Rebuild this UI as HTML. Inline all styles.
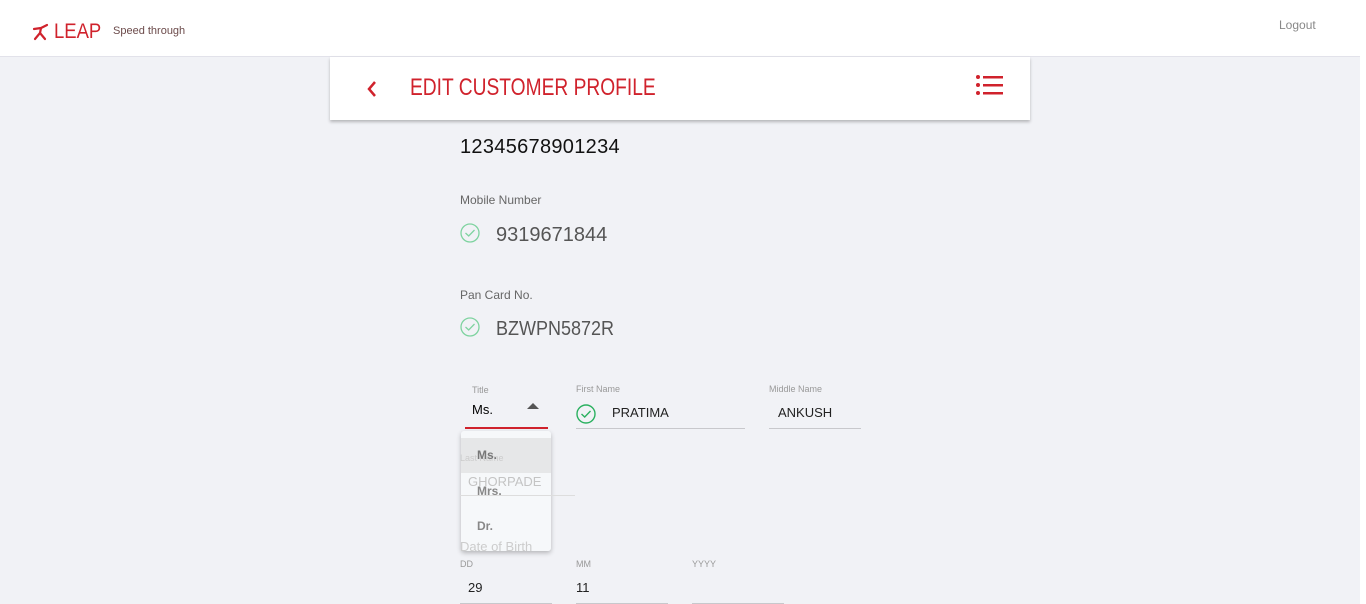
<!DOCTYPE html>
<html><head><meta charset="utf-8"><style>
*{margin:0;padding:0;box-sizing:border-box}
body{width:1366px;height:604px;overflow:hidden;background:#f1f2f6;font-family:"Liberation Sans",sans-serif;position:relative}
.a{position:absolute;white-space:nowrap}
.hdr{left:0;top:0;width:1360px;height:57px;background:#fff;border-bottom:1px solid #e2e2ea}
.sb{left:1360px;top:0;width:6px;height:604px;background:#fff}
.card{left:330px;top:57px;width:700px;height:63px;background:#fff;box-shadow:0 2px 3px rgba(0,0,0,.25)}
.lbl{font-size:12px;color:#666}
.sm{font-size:9px;color:#999}
.line{height:1px;background:#c8c8cc}
.red{color:#d0222c}
</style></head><body>
<div class="a hdr"></div>
<div class="a sb"></div>
<svg class="a" style="left:32px;top:23px" width="18" height="18" viewBox="0 0 18 18"><g stroke="#d0222c" stroke-width="2.2" fill="none" stroke-linecap="round"><path d="M2 6 L9 5 L15 2"/><path d="M9 5 L8 10 L3 16"/><path d="M8 10 L13 16"/></g></svg>
<div class="a red" style="left:54px;top:20px;font-size:21px;transform:scaleX(.88);transform-origin:left">LEAP</div>
<div class="a" style="left:113px;top:25px;font-size:11px;color:#6b4a4a">Speed through</div>
<div class="a" style="left:1279px;top:18px;font-size:12px;color:#888">Logout</div>
<div class="a card"></div>
<svg class="a" style="left:366px;top:80px" width="12" height="18" viewBox="0 0 12 18"><path d="M9 2 L3 9 L9 16" stroke="#d0222c" stroke-width="2.5" fill="none"/></svg>
<div class="a red" style="left:410px;top:74px;font-size:24px;transform:scaleX(.8);transform-origin:left">EDIT CUSTOMER PROFILE</div>
<svg class="a" style="left:976px;top:75px" width="28" height="22" viewBox="0 0 28 22"><g fill="#d0222c"><circle cx="2" cy="2" r="2"/><circle cx="2" cy="10" r="2"/><circle cx="2" cy="18" r="2"/><rect x="7" y="1" width="20" height="2.5"/><rect x="7" y="9" width="20" height="2.5"/><rect x="7" y="17" width="20" height="2.5"/></g></svg>
<div class="a" style="left:460px;top:136px;font-size:20px;color:#111;letter-spacing:.3px">12345678901234</div>
<div class="a lbl" style="left:460px;top:193px">Mobile Number</div>
<svg class="a" style="left:460px;top:223px" width="20" height="20" viewBox="0 0 20 20"><circle cx="10" cy="10" r="9" stroke="#7fd3a0" stroke-width="1.3" fill="none"/><path d="M5.5 10 L8.7 13 L14.5 7" stroke="#7fd3a0" stroke-width="1.3" fill="none"/></svg>
<div class="a" style="left:496px;top:224px;font-size:20px;color:#555">9319671844</div>
<div class="a lbl" style="left:460px;top:288px">Pan Card No.</div>
<svg class="a" style="left:460px;top:317px" width="20" height="20" viewBox="0 0 20 20"><circle cx="10" cy="10" r="9" stroke="#7fd3a0" stroke-width="1.3" fill="none"/><path d="M5.5 10 L8.7 13 L14.5 7" stroke="#7fd3a0" stroke-width="1.3" fill="none"/></svg>
<div class="a" style="left:496px;top:318px;font-size:20px;color:#555;transform:scaleX(.9);transform-origin:left">BZWPN5872R</div>
<div class="a sm" style="left:472px;top:385px">Title</div>
<div class="a" style="left:472px;top:402px;font-size:13px;color:#000">Ms.</div>
<div class="a" style="left:527px;top:403px;width:0;height:0;border-left:6px solid transparent;border-right:6px solid transparent;border-bottom:6px solid #555"></div>
<div class="a" style="left:465px;top:427px;width:83px;height:2px;background:#d0222c"></div>
<div class="a sm" style="left:576px;top:384px">First Name</div>
<svg class="a" style="left:576px;top:404px" width="20" height="20" viewBox="0 0 20 20"><circle cx="10" cy="10" r="9" stroke="#2bb160" stroke-width="1.4" fill="none"/><path d="M5.5 10 L8.7 13 L14.5 7" stroke="#2bb160" stroke-width="1.4" fill="none"/></svg>
<div class="a" style="left:612px;top:405px;font-size:13px;color:#222">PRATIMA</div>
<div class="a line" style="left:576px;top:428px;width:169px"></div>
<div class="a sm" style="left:769px;top:384px">Middle Name</div>
<div class="a" style="left:778px;top:405px;font-size:13px;color:#222">ANKUSH</div>
<div class="a line" style="left:769px;top:428px;width:92px"></div>
<div class="a" style="left:461px;top:431px;width:90px;height:120px;background:rgba(250,251,253,.6);border-radius:3px;box-shadow:0 2px 5px rgba(0,0,0,.25)"></div>
<div class="a" style="left:461px;top:438px;width:90px;height:35px;background:rgba(226,226,228,.8)"></div>
<div class="a sm" style="left:460px;top:453px;color:#ccc">Last Name</div>
<div class="a" style="left:468px;top:474px;font-size:13px;color:#c4c4c4">GHORPADE</div>
<div class="a line" style="left:460px;top:495px;width:115px;background:#ddd"></div>
<div class="a" style="left:460px;top:539px;font-size:13px;color:#ccc">Date of Birth</div>
<div class="a" style="left:477px;top:448px;font-size:12px;color:#777;font-weight:bold">Ms.</div>
<div class="a" style="left:477px;top:484px;font-size:12px;color:#888;font-weight:bold">Mrs.</div>
<div class="a" style="left:477px;top:519px;font-size:12px;color:#888;font-weight:bold">Dr.</div>
<div class="a sm" style="left:460px;top:559px">DD</div>
<div class="a" style="left:468px;top:580px;font-size:13px;color:#222">29</div>
<div class="a line" style="left:460px;top:603px;width:92px"></div>
<div class="a sm" style="left:576px;top:559px">MM</div>
<div class="a" style="left:576px;top:580px;font-size:13px;color:#222">11</div>
<div class="a line" style="left:576px;top:603px;width:92px"></div>
<div class="a sm" style="left:692px;top:559px">YYYY</div>
<div class="a line" style="left:692px;top:603px;width:92px"></div>
</body></html>
